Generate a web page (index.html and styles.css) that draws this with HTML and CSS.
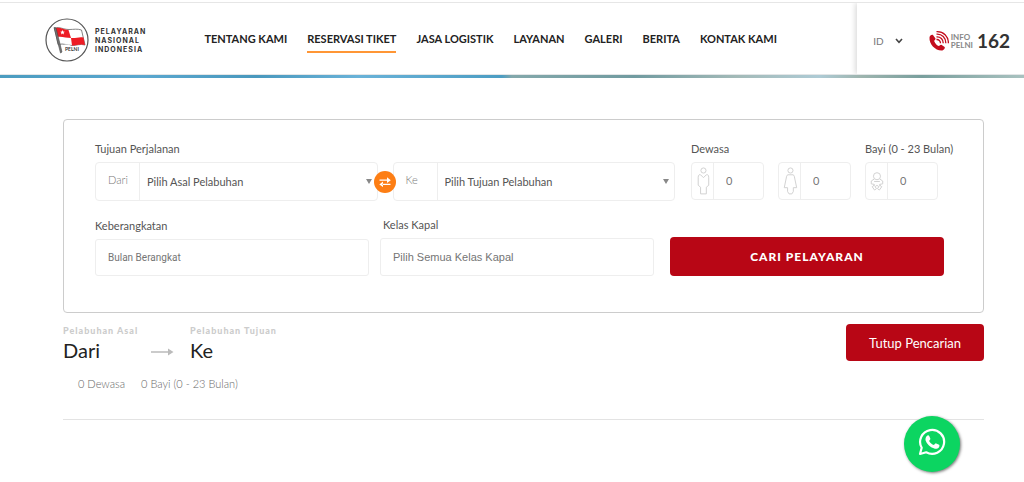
FILE: index.html
```html
<!DOCTYPE html>
<html lang="id">
<head>
<meta charset="utf-8">
<meta name="viewport" content="width=device-width, initial-scale=1">
<title>PELNI - Reservasi Tiket</title>
<link rel="stylesheet" href="styles.css">
</head>
<body>
<header class="header">
  <a class="brand" href="#">
    <svg class="brand-mark" viewBox="0 0 44 44" aria-hidden="true">
      <circle cx="22" cy="22" r="21" fill="#fff" stroke="#555" stroke-width="1.2"/>
      <path d="M9.500 10 C15 8.500 18 11.500 24 11.500 C29 11.500 32 10.500 36.500 12 L40 27 C35 25.500 32 27.500 27 27.500 C22 27.500 19 25 13 26.500 Z" fill="#fff" stroke="#666" stroke-width=".8"/>
      <path d="M10 10.300 C15 8.800 18 11.500 23.500 12 L26 20 C21 20 17 18 12 19 Z" fill="#ed1c24"/>
      <path d="M26 20 C31 20.500 34 18.500 38.500 19.500 L40 27 C35 25.500 32 27.500 27 27.500 Z" fill="#ed1c24"/>
      <path d="M17.500 12 l.7 1.500 1.600.2 -1.200 1.100 .3 1.600 -1.400-.8 -1.400.8 .3-1.600 -1.200-1.100 1.600-.2z" fill="#fff"/>
      <path d="M9 9.500 L15.500 35 L17 34 L11 10 Z" fill="#777" stroke="#444" stroke-width=".6"/>
      <path d="M17 27.500q5-2 9 .3t11 .2v6.500H18z" fill="#fff"/>
      <text class="brand-tag" x="20" y="33">PELNI</text>
    </svg>
    <span class="brand-name">PELAYARAN<br>NASIONAL<br>INDONESIA</span>
  </a>
  <nav class="nav">
    <a href="#">TENTANG KAMI</a>
    <a class="active" href="#">RESERVASI TIKET</a>
    <a href="#">JASA LOGISTIK</a>
    <a href="#">LAYANAN</a>
    <a href="#">GALERI</a>
    <a href="#">BERITA</a>
    <a href="#">KONTAK KAMI</a>
  </nav>
  <div class="tools">
    <button class="lang" type="button">ID
      <svg width="8" height="6" viewBox="0 0 8 6" aria-hidden="true"><path d="M1 1l3 3.300L7 1" fill="none" stroke="#444" stroke-width="1.600"/></svg>
    </button>
    <a class="call" href="tel:162">
      <svg width="20" height="20" viewBox="0 0 20 20" aria-hidden="true">
        <path d="M.5 6.500 C.8 4.500 2.500 3.500 4 4 L6.500 7.500 C6.800 8.500 5 9.300 5.200 10.200 C6.500 13 8 14.400 9.800 15 C10.800 15 11.200 13.500 12.300 13.800 L15.700 16 C16.300 17.500 14.500 19.500 12.500 19.500 C6 19.500 0 13 .5 6.500Z" fill="#c40d1e"/>
        <path d="M7.500 8.500c2.300-.2 4 1.400 4 3.800M7.500 5.800c4-.3 6.800 2.500 6.700 6.500M7.500 3.200c5.500-.4 9.400 3.500 9.300 9.100M7.500.7c7-.4 12 4.800 11.900 11.600" fill="none" stroke="#c40d1e" stroke-width="1.300"/>
      </svg>
      <span class="call-name">INFO<br>PELNI</span>
      <strong class="call-number">162</strong>
    </a>
  </div>
</header>
<div class="sea"></div>

<main class="page">
  <form class="search">
    <div class="row route">
      <div class="field port">
        <label for="from">Tujuan Perjalanan</label>
        <div class="box">
          <span class="prefix">Dari</span>
          <select id="from"><option>Pilih Asal Pelabuhan</option></select>
        </div>
        <button class="swap" type="button" aria-label="Tukar pelabuhan">
          <svg width="12" height="10" viewBox="0 0 12 10" aria-hidden="true"><path d="M.5 2.500h8v1.300h-8zM8 .3l3.800 2.900L8 6zM3.500 6.700h8V8h-8zM4 4.600L.3 7.400 4 10z" fill="#fff"/></svg>
        </button>
      </div>
      <div class="field port">
        <label for="to" class="blank" aria-label="Pelabuhan tujuan"></label>
        <div class="box">
          <span class="prefix">Ke</span>
          <select id="to"><option>Pilih Tujuan Pelabuhan</option></select>
        </div>
      </div>
      <div class="people">
        <div class="field">
          <label for="men">Dewasa</label>
          <div class="box count">
            <svg viewBox="0 0 22 36" aria-hidden="true"><g fill="none" stroke="#d0d0d0"><circle cx="12" cy="7" r="2.700"/><path d="M9 11.500h-1.500Q6.500 12 6.500 14v8.500l2.500 2v7h6v-7l2.500-2V14q0-2-1-2.500H15l-3 3z"/></g></svg>
            <input id="men" type="text" value="0">
          </div>
        </div>
        <div class="field">
          <label for="women" class="blank" aria-label="Dewasa wanita"></label>
          <div class="box count">
            <svg viewBox="0 0 22 36" aria-hidden="true"><g fill="none" stroke="#d0d0d0"><circle cx="12" cy="7" r="2.700"/><path d="M9 11.500h6l1 1.500 2.500 12H15v4l-1.500 2.500h-3L9 29v-4H5.500L8 13z"/></g></svg>
            <input id="women" type="text" value="0">
          </div>
        </div>
        <div class="field">
          <label for="infants">Bayi (0 - 23 Bulan)</label>
          <div class="box count">
            <svg viewBox="0 0 22 36" aria-hidden="true"><g fill="none" stroke="#d0d0d0"><circle cx="11.500" cy="13" r="3.700"/><path d="M8.500 16l-3 2v3l3 .5v2M14.500 16l3 2v3l-3 .5v2M8.500 18.500h6M9 22l-2.500 2 2.500 3.500 2-1.500L9.500 24l2-1.500 2 1.500-1.500 2 2 1.500 2.500-3.500-2.500-2"/></g></svg>
            <input id="infants" type="text" value="0">
          </div>
        </div>
      </div>
    </div>
    <div class="row details">
      <div class="field">
        <label for="month">Keberangkatan</label>
        <input class="text-input month" id="month" type="text" placeholder="Bulan Berangkat">
      </div>
      <div class="field">
        <label for="class" class="inset">Kelas Kapal</label>
        <input class="text-input class" id="class" type="text" placeholder="Pilih Semua Kelas Kapal">
      </div>
      <button class="submit" type="submit">CARI PELAYARAN</button>
    </div>
  </form>

  <section class="summary">
    <div class="trip">
      <div class="stops">
        <div class="stop"><span class="stop-label">Pelabuhan Asal</span><span class="stop-name">Dari</span></div>
        <svg class="arrow" width="23" height="8" viewBox="0 0 23 8" aria-hidden="true"><path d="M0 3.300h17V.5L22.500 4 17 7.500V4.700H0z" fill="#bbb"/></svg>
        <div class="stop"><span class="stop-label">Pelabuhan Tujuan</span><span class="stop-name">Ke</span></div>
      </div>
      <div class="totals"><span>0 Dewasa</span><span>0 Bayi (0 - 23 Bulan)</span></div>
    </div>
    <button class="close" type="button">Tutup Pencarian</button>
  </section>
</main>

<a class="whatsapp" href="#" aria-label="WhatsApp">
  <svg width="28" height="28" viewBox="0 0 28 28" aria-hidden="true">
    <path d="M2 26l1.700-6.200A12 12 0 1 1 8.200 24.300Z" fill="none" stroke="#fff" stroke-width="2.200" stroke-linejoin="round"/>
    <path d="M9.500 7.500c.7-.3 1.300-.2 1.700.6l1.100 2.500c.2.700-.1 1.100-1.200 2.300 1.300 2.200 2.700 3.300 4.900 4.200 1-1.100 1.500-2 2.200-1.700l2.900 1.400c.6.400.4 1.600-.1 2.400-1 1.400-3 1.900-4.700 1.400-4.500-1.300-7.500-4.600-8.700-8-.5-2 .5-4.300 1.900-5.100z" fill="#fff"/>
  </svg>
</a>
</body>
</html>
```
FILE: styles.css
```css
* { box-sizing: border-box; }

body {
  margin: 0;
  padding-top: 2px;
  background: #fff;
  color: #555;
  font-family: Lato, "Liberation Sans", sans-serif;
  font-size: 11px;
  line-height: 14px;
}

a { color: inherit; text-decoration: none; }

button, input, select { font: inherit; color: inherit; }

button { border: 0; padding: 0; cursor: pointer; }

.header {
  display: flex;
  align-items: stretch;
  height: 73px;
  padding-left: 45px;
  border-top: 1px solid #e6e6e6;
  border-bottom: 1px solid #e3e6e7;
}

.brand {
  display: flex;
  align-items: center;
  gap: 6px;
  margin-right: 58px;
  padding-top: 3px;
}

.brand-mark { width: 44px; height: 44px; }

.brand-tag { font: bold 5px Lato, sans-serif; fill: #333; }

.brand-name {
  color: #333;
  font-family: Inter, sans-serif;
  font-size: 7px;
  font-weight: 700;
  letter-spacing: 1px;
  line-height: 9px;
  white-space: nowrap;
}

.nav {
  flex: 1;
  display: flex;
  align-items: center;
  gap: 20px;
  color: #222;
  font-weight: 700;
  white-space: nowrap;
}

.nav a { padding: 7px 0 5px; border-bottom: 2px solid transparent; }

.nav .active { border-color: #ff9635; }

.tools {
  display: flex;
  align-items: center;
  gap: 26px;
  padding: 4px 14px 0 16px;
  box-shadow: -2px 0 5px #ddd;
  clip-path: inset(0 0 0 -8px);
}

.lang {
  display: flex;
  align-items: center;
  gap: 11px;
  background: none;
  color: #777;
  font-size: 10px;
}

.call { display: flex; align-items: center; gap: 2px; }

.call-name { color: #888; font-size: 8px; font-weight: 700; line-height: 8px; }

.call-number { margin-left: 2px; color: #333; font-size: 19px; line-height: 24px; }

.sea {
  height: 3px;
  background: linear-gradient(90deg, #4b9cc0, #5aa7cf 14%, #4998bd 25%, #69b2d8 35%, #4c9dc3 49%, #83a8ab 50%, #719ba0 62%, #a3bab8 72%, #aecbd5 80%, #9eb5af 84%, #799f9d 90%, #a9c2c0);
}

.page { padding: 41px 40px 0 63px; }

.search {
  padding: 22px 39px 36px 31px;
  border: 1px solid #ccc;
  border-radius: 4px;
}

.row { display: flex; }

.route { align-items: flex-start; gap: 15px; padding-right: 6px; }

.field { position: relative; min-width: 0; }

.field label { display: block; height: 20px; white-space: nowrap; }

.port { flex: 1; }

.box {
  display: flex;
  height: 39px;
  border: 1px solid #eee;
  border-radius: 4px;
}

.prefix {
  flex: none;
  width: 44px;
  padding: 10px 0 0 12px;
  border-right: 1px solid #eee;
  color: #777;
  font-weight: 300;
}

.box select {
  flex: 1;
  min-width: 0;
  padding: 0 7px;
  border: 0;
  appearance: none;
  background: none;
}

/* Dropdown marker */
.port .box::after {
  content: "";
  align-self: center;
  margin-right: 5px;
  border: 3px solid transparent;
  border-top: 5px solid #888;
  border-bottom: 0;
}

.swap {
  position: absolute;
  z-index: 1;
  right: -18px;
  bottom: 8px;
  display: flex;
  align-items: center;
  justify-content: center;
  width: 22px;
  height: 22px;
  border-radius: 50%;
  background: #fd7e14;
}

.people { display: flex; gap: 14px; padding-left: 1px; }

.people .field { width: 73px; }

.count { height: 38px; }

.count svg { flex: none; width: 22px; height: 36px; border-right: 1px solid #eee; }

.count input {
  width: 100%;
  min-width: 0;
  padding: 0 12px;
  border: 0;
  background: none;
  color: #777;
}

.details { align-items: flex-end; gap: 11px; margin-top: 17px; }

.details .field, .submit { flex: 1; }

.field .inset { padding-left: 3px; }

.text-input {
  display: block;
  width: 100%;
  padding: 0 12px;
  border: 1px solid #eee;
  border-radius: 3px;
}

.text-input::placeholder { color: #757575; opacity: 1; }

.month { height: 37px; font-family: Roboto, sans-serif; font-size: 10px; }

.class { height: 38px; font-family: "Liberation Sans", sans-serif; font-size: 11px; }

.submit, .close {
  border-radius: 4px;
  background: #b80615;
  color: #fff;
}

.submit {
  height: 39px;
  margin-left: 5px;
  font-size: 12px;
  font-weight: 900;
  letter-spacing: 1px;
}

.summary {
  display: flex;
  align-items: flex-start;
  justify-content: space-between;
  padding: 11px 0 28px;
  border-bottom: 1px solid #e3e3e3;
}

.stops { display: flex; align-items: flex-end; }

.stop-label {
  display: block;
  color: #ccc;
  font-size: 9px;
  font-weight: 900;
  letter-spacing: 1px;
  line-height: 14px;
}

.stop-name { display: block; color: #222; font-size: 20px; line-height: 25px; }

.stop { width: 88px; white-space: nowrap; }

.arrow { margin: 0 16px 7px 0; }

.totals {
  display: flex;
  gap: 16px;
  padding: 14px 0 0 15px;
  color: #666;
  font-weight: 300;
}

.close { height: 37px; padding: 0 23px; font-size: 13px; }

.whatsapp {
  position: fixed;
  right: 64px;
  bottom: 10px;
  display: flex;
  align-items: center;
  justify-content: center;
  width: 56px;
  height: 56px;
  padding-bottom: 4px;
  border-radius: 50%;
  background: #0cd561;
  box-shadow: 1px 1px 3px #777;
}
```
